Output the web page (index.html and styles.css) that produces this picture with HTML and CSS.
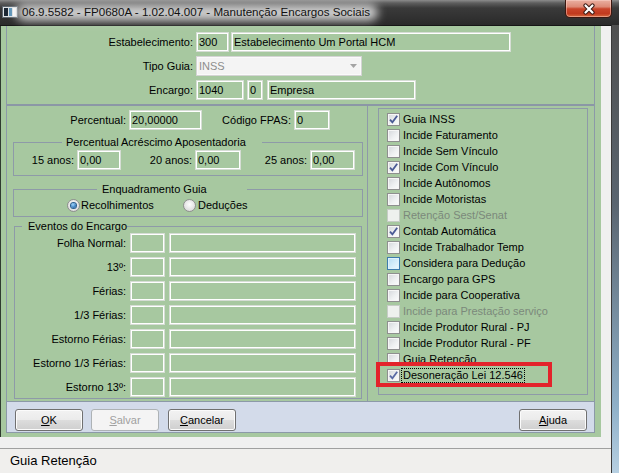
FILE: index.html
```html
<!DOCTYPE html>
<html lang="pt-BR">
<head>
<meta charset="utf-8">
<title>Manutenção Encargos Sociais</title>
<link rel="stylesheet" href="styles.css">
</head>
<body>
<div class="win">
  <header class="titlebar">
    <svg class="appicon" width="16" height="12" viewBox="0 0 16 12">
      <rect x="0.5" y="0.5" width="15" height="11" fill="#dfe3e6" stroke="#5f6870"/>
      <rect x="2" y="2" width="4" height="8" fill="#1c2733"/>
      <rect x="7" y="2" width="3" height="8" fill="#5b93b8"/>
      <rect x="11" y="2" width="3" height="8" fill="#ffffff"/>
    </svg>
    <span class="title">06.9.5582 - FP0680A - 1.02.04.007 - Manutenção Encargos Sociais</span>
    <div class="close">
      <svg width="14" height="12" viewBox="0 0 14 12">
        <path d="M3.5 2.5 L10.5 9.5 M10.5 2.5 L3.5 9.5" stroke="#3b1a14" stroke-width="4.2" stroke-linecap="round"/>
        <path d="M3.5 2.5 L10.5 9.5 M10.5 2.5 L3.5 9.5" stroke="#ffffff" stroke-width="2.2" stroke-linecap="round"/>
      </svg>
    </div>
  </header>
  <div class="frame">
    <div class="client">
      <div class="form-area">
        <div class="panel">
          <section class="top">
            <div class="row">
              <span class="lbl lbl-top">Estabelecimento:</span>
              <span class="inp w-estab">300</span>
              <span class="inp w-estabdesc">Estabelecimento Um Portal HCM</span>
            </div>
            <div class="row">
              <span class="lbl lbl-top">Tipo Guia:</span>
              <span class="combo"><span>INSS</span>
                <svg width="7" height="4" viewBox="0 0 7 4"><path d="M0 0 H7 L3.5 4 Z" fill="#a3a3a3"/></svg>
              </span>
            </div>
            <div class="row">
              <span class="lbl lbl-top">Encargo:</span>
              <span class="inp w-enc">1040</span>
              <span class="inp w-enc2">0</span>
              <span class="inp w-encdesc">Empresa</span>
            </div>
          </section>
          <div class="sep"></div>
          <section class="lower">
            <div class="lcol">
              <div class="row perc-row">
                <span class="lbl w-lperc">Percentual:</span>
                <span class="inp w-perc">20,00000</span>
                <span class="lbl w-lfpas">Código FPAS:</span>
                <span class="inp w-fpas">0</span>
              </div>
              <fieldset class="grp g-aposent">
                <legend>Percentual Acréscimo Aposentadoria</legend>
                <div class="row">
                  <span class="lbl w-a15">15 anos:</span><span class="inp w-a15i">0,00</span>
                  <span class="lbl w-a20">20 anos:</span><span class="inp w-a20i">0,00</span>
                  <span class="lbl w-a25">25 anos:</span><span class="inp w-a25i">0,00</span>
                </div>
              </fieldset>
              <fieldset class="grp g-enq">
                <legend>Enquadramento Guia</legend>
                <div class="radios">
                  <span class="radio on"></span><span class="rlbl rl1">Recolhimentos</span>
                  <span class="radio"></span><span class="rlbl rl2">Deduções</span>
                </div>
              </fieldset>
              <fieldset class="grp g-evt">
                <legend>Eventos do Encargo</legend>
                <div class="evrows">
                  <div class="evrow"><span class="lbl w-ev">Folha Normal:</span><span class="inp w-evc"></span><span class="inp w-evd"></span></div>
                  <div class="evrow"><span class="lbl w-ev">13º:</span><span class="inp w-evc"></span><span class="inp w-evd"></span></div>
                  <div class="evrow"><span class="lbl w-ev">Férias:</span><span class="inp w-evc"></span><span class="inp w-evd"></span></div>
                  <div class="evrow"><span class="lbl w-ev">1/3 Férias:</span><span class="inp w-evc"></span><span class="inp w-evd"></span></div>
                  <div class="evrow"><span class="lbl w-ev">Estorno Férias:</span><span class="inp w-evc"></span><span class="inp w-evd"></span></div>
                  <div class="evrow"><span class="lbl w-ev">Estorno 1/3 Férias:</span><span class="inp w-evc"></span><span class="inp w-evd"></span></div>
                  <div class="evrow"><span class="lbl w-ev">Estorno 13º:</span><span class="inp w-evc"></span><span class="inp w-evd"></span></div>
                </div>
              </fieldset>
            </div>
            <div class="rcol">
              <div class="chkgrp">
                <div class="chk"><span class="cb on"><svg width="9" height="9" viewBox="0 0 9 9"><path d="M1 4.6 L3.4 7.4 L8.2 0.8" fill="none" stroke="#4a5a95" stroke-width="1.8"/></svg></span><span class="ct">Guia INSS</span></div>
                <div class="chk"><span class="cb"></span><span class="ct">Incide Faturamento</span></div>
                <div class="chk"><span class="cb"></span><span class="ct">Incide Sem Vínculo</span></div>
                <div class="chk"><span class="cb on"><svg width="9" height="9" viewBox="0 0 9 9"><path d="M1 4.6 L3.4 7.4 L8.2 0.8" fill="none" stroke="#4a5a95" stroke-width="1.8"/></svg></span><span class="ct">Incide Com Vínculo</span></div>
                <div class="chk"><span class="cb"></span><span class="ct">Incide Autônomos</span></div>
                <div class="chk"><span class="cb"></span><span class="ct">Incide Motoristas</span></div>
                <div class="chk dis"><span class="cb"></span><span class="ct">Retenção Sest/Senat</span></div>
                <div class="chk"><span class="cb on"><svg width="9" height="9" viewBox="0 0 9 9"><path d="M1 4.6 L3.4 7.4 L8.2 0.8" fill="none" stroke="#4a5a95" stroke-width="1.8"/></svg></span><span class="ct">Contab Automática</span></div>
                <div class="chk"><span class="cb"></span><span class="ct">Incide Trabalhador Temp</span></div>
                <div class="chk hov"><span class="cb"></span><span class="ct">Considera para Dedução</span></div>
                <div class="chk"><span class="cb"></span><span class="ct">Encargo para GPS</span></div>
                <div class="chk"><span class="cb"></span><span class="ct">Incide para Cooperativa</span></div>
                <div class="chk dis"><span class="cb"></span><span class="ct">Incide para Prestação serviço</span></div>
                <div class="chk"><span class="cb"></span><span class="ct">Incide Produtor Rural - PJ</span></div>
                <div class="chk"><span class="cb"></span><span class="ct">Incide Produtor Rural - PF</span></div>
                <div class="chk"><span class="cb"></span><span class="ct">Guia Retenção</span></div>
                <div class="chk mark"><span class="cb on"><svg width="9" height="9" viewBox="0 0 9 9"><path d="M1 4.6 L3.4 7.4 L8.2 0.8" fill="none" stroke="#5a6aa5" stroke-width="1.8"/></svg></span><span class="ct focus">Desoneração Lei 12.546</span><span class="redbox"></span></div>
              </div>
            </div>
          </section>
        </div>
        <div class="btnbar">
          <span class="btn"><u>O</u>K</span>
          <span class="btn dis b-salvar"><u>S</u>alvar</span>
          <span class="btn b-cancel"><u>C</u>ancelar</span>
          <span class="btn b-ajuda"><u>A</u>juda</span>
        </div>
      </div>
      <div class="statusgap"></div>
      <div class="status">Guia Retenção</div>
    </div>
    <div class="rframe"></div>
  </div>
</div>
</body>
</html>
```
FILE: styles.css
```css
* { box-sizing: border-box; }
html, body { margin: 0; padding: 0; }
body {
  width: 619px; height: 473px; overflow: hidden;
  background: #2c2c2c;
  font-family: "Liberation Sans", Arial, sans-serif;
  font-size: 11px; color: #000;
}
.win { width: 619px; height: 473px; display: flex; flex-direction: column; }

/* title bar */
.titlebar {
  height: 25px; flex: none; display: flex; align-items: flex-start;
  background: linear-gradient(#8c8c8c 0, #5e5e5e 3px, #3a3a3a 8px, #2a2a2a 100%);
}
.appicon { margin: 6px 0 0 2px; flex: none; }
.title {
  position: relative; z-index: 0;
  margin-left: 4px; line-height: 24px; font-size: 11.6px; color: #111; white-space: nowrap;
}
.title::before {
  content: ""; position: absolute; left: -6px; right: -8px; top: 4px; bottom: 3px;
  background: rgba(214, 214, 214, .95); filter: blur(5px); border-radius: 10px; z-index: -1;
}
.close {
  margin-left: auto; margin-right: 7px; width: 47px; height: 18px; flex: none;
  border: 1px solid #3b1710; border-top: none; border-radius: 0 0 5px 5px;
  background: linear-gradient(#eab0a2 0, #dd8a76 40%, #c9452b 52%, #c13a1f 80%, #d76a3e 100%);
  box-shadow: inset 0 0 0 1px rgba(255, 220, 210, .45);
  display: flex; align-items: center; justify-content: center;
}

/* frame */
.frame { flex: 1; display: flex; min-height: 0; }
.client {
  width: 612px; flex: none; display: flex; flex-direction: column;
  background: #f0f0f0; border-top: 1px solid #161616; border-right: 1px solid #3a3a3a;
}
.rframe { flex: 1; background: linear-gradient(#505050 0, #5a6570 40%, #8fb0c8 85%, #b7d0e2 100%); }

.form-area {
  width: 601px; height: 411px; flex: none;
  background: #a7c8a0; border-left: 1px solid #2f3a2f;
  padding: 0 6px 4px 5px; display: flex; flex-direction: column;
}
.panel {
  height: 375px; flex: none; display: flex; flex-direction: column;
  border-left: 1px solid #8c99a8; border-right: 1px solid #8c99a8;
}

.row { display: flex; height: 20px; flex: none; }
.lbl { flex: none; text-align: right; line-height: 20px; padding-right: 3px; white-space: nowrap; }
.inp {
  display: block; flex: none; height: 20px;
  border: 1px solid #d6ddd5; box-shadow: inset 0 0 0 1px #fff;
  padding: 0 2px; line-height: 18px; white-space: nowrap; overflow: hidden;
}

/* top section */
.top { height: 78px; flex: none; padding-top: 6px; display: flex; flex-direction: column; gap: 4px; }
.lbl-top { width: 189px; }
.w-estab { width: 33px; }
.w-estabdesc { width: 280px; margin-left: 2px; }
.w-enc { width: 48px; }
.w-enc2 { width: 16px; margin-left: 3px; }
.w-encdesc { width: 149px; margin-left: 4px; }
.combo {
  width: 166px; height: 20px; display: flex; align-items: center; justify-content: space-between;
  border: 1px solid #d4d4d4; background: #f4f4f4; box-shadow: inset 0 0 0 1px #fafafa;
  color: #8d8d8d; padding: 0 4px 0 2px;
}
.sep { height: 2px; flex: none; background: #8b97a6; }

/* lower section */
.lower { flex: 1; display: flex; min-height: 0; }
.lcol { width: 361px; flex: none; border-right: 1px solid #8e9aa8; display: flex; flex-direction: column; }
.rcol { flex: 1; }

.perc-row { margin-top: 4px; }
.w-lperc { width: 122px; }
.w-perc { width: 73px; }
.w-lfpas { width: 92px; }
.w-fpas { width: 36px; }

fieldset.grp { margin: 0; padding: 0; border: 1px solid #8e9aa8; min-width: 0; }
fieldset.grp legend { padding: 0; line-height: 13px; font-size: 11px; white-space: nowrap; }

.g-aposent { width: 350px; margin: 6px 0 0 6px !important; padding: 1px 0 5px !important; }
.g-aposent legend { margin-left: 48px; width: 200px; padding-left: 4px !important; }
.w-a15 { width: 63px; }
.w-a15i { width: 44px; }
.w-a20 { width: 74px; }
.w-a20i { width: 46px; }
.w-a25 { width: 69px; }
.w-a25i { width: 45px; }

.g-enq { width: 350px; margin: 7px 0 0 6px !important; padding: 3px 0 4px !important; }
.g-enq legend { margin-left: 83px; width: 150px; padding-left: 5px !important; }
.radios { display: flex; align-items: center; height: 13px; padding-left: 53px; }
.radio {
  width: 13px; height: 13px; flex: none; border-radius: 50%;
  border: 1px solid #8f8f8f;
  background: radial-gradient(circle at 50% 40%, #fdfdfd 0, #e3e3e3 60%, #cbcbcb 100%);
  display: grid; place-items: center;
}
.radio.on::after {
  content: ""; width: 5px; height: 5px; border-radius: 50%;
  background: radial-gradient(circle at 40% 35%, #9fd8ff, #1b5fa8 80%);
  box-shadow: 0 0 0 1px #2a5f8f;
}
.rlbl { line-height: 13px; white-space: nowrap; }
.rl1 { width: 103px; padding-left: 1px; }
.rl2 { padding-left: 2px; }

.g-evt { width: 348px; margin: 3px 0 0 7px !important; padding: 0 0 1px !important; }
.g-evt legend { margin-left: 7px; width: 105px; padding-left: 6px !important; }
.evrows { display: flex; flex-direction: column; gap: 4px; }
.evrow { display: flex; height: 20px; }
.w-ev { width: 115px; padding-right: 4px; }
.w-evc { width: 35px; }
.w-evd { width: 187px; margin-left: 4px; }

/* check list */
.chkgrp {
  width: 210px; height: 287px; margin: 2px 0 0 10px;
  border: 1px solid #8e9aa8; padding: 3px 0 0 8px;
}
.chk { position: relative; display: flex; align-items: flex-start; height: 16px; }
.cb {
  width: 13px; height: 13px; flex: none; margin-top: 1px;
  border: 1px solid #8e8f8f;
  background: linear-gradient(135deg, #d3d6da 0, #eef0f1 55%, #fdfdfd 100%);
  box-shadow: inset 0 0 0 1px #f6f6f6;
  display: grid; place-items: center;
}
.ct { margin: 1px 0 0 2px; line-height: 13px; padding: 0 1px; white-space: nowrap; }
.chk.dis .cb { border-color: #c6ccc6; background: #eef1ee; box-shadow: none; }
.chk.dis .ct { color: #7b887b; }
.chk.hov .cb {
  border-color: #3d7bad;
  background: linear-gradient(135deg, #b6dcf3 0, #d9effb 60%, #eef8fd 100%);
  box-shadow: inset 0 0 0 1px #def2fc;
}
.ct.focus { outline: 1px dotted #000; outline-offset: 0; }
.redbox {
  position: absolute; left: -11px; top: -6px; width: 176px; height: 25px;
  border: 4px solid #e3232b;
}

/* buttons */
.btnbar {
  height: 32px; flex: none; display: flex; align-items: flex-start;
  border: 1px solid #8c99a8; background: #d3dbea;
  padding: 7px 7px 0 8px;
}
.btn {
  width: 68px; height: 22px; flex: none;
  border: 1px solid #707070; border-radius: 3px;
  background: linear-gradient(#f2f2f2 0, #ebebeb 49%, #dddddd 50%, #cfcfcf 100%);
  box-shadow: inset 0 0 0 1px #fbfbfb;
  display: flex; align-items: center; justify-content: center;
}
.btn u { text-decoration-thickness: 1px; text-underline-offset: 1px; }
.btn.dis { border-color: #adb2b5; background: #f4f4f4; color: #a0a0a0; box-shadow: none; }
.b-salvar { margin-left: 8px; }
.b-cancel { margin-left: 9px; }
.b-ajuda { margin-left: auto; }

/* status */
.statusgap { height: 11px; flex: none; }
.status {
  height: 25px; flex: none; border-top: 1px solid #a0a0a0;
  background: #f0efed; padding-left: 10px; font-size: 13px; line-height: 23px;
}
```
